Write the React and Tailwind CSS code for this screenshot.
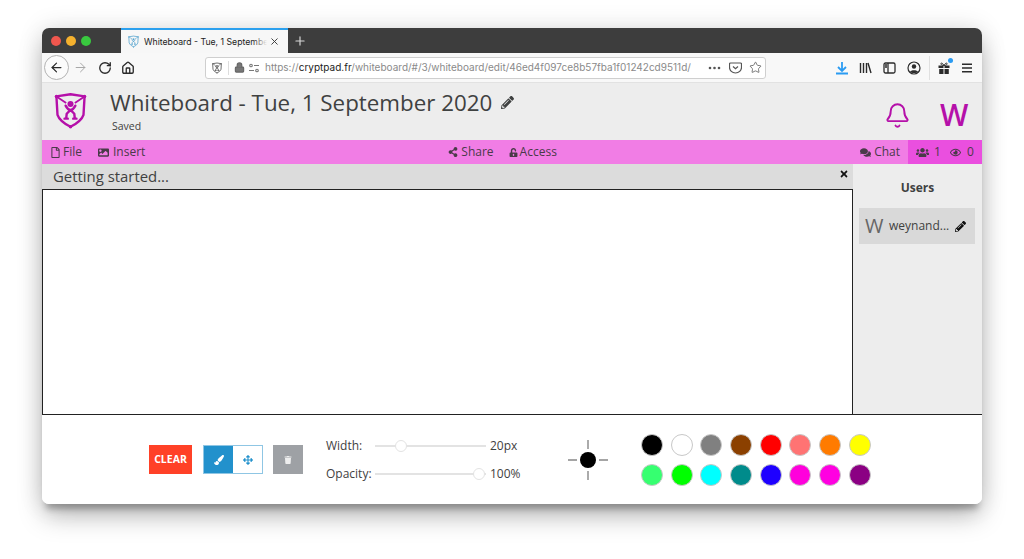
import React from "react";
import { FaRegFile, FaImage, FaShareAlt, FaUnlockAlt, FaComments, FaUsers, FaRegEye, FaPencilAlt, FaTimes, FaPaintBrush, FaArrowsAlt, FaTrash } from "react-icons/fa";
import { Bell, ArrowLeft, ArrowRight, RotateCw, House, Lock, Star, X, Plus } from "lucide-react";

const colors = [
  ["#000000", "#ffffff", "#808080", "#8b4000", "#ff0000", "#ff7373", "#ff7b00", "#ffff00"],
  ["#36ff70", "#00ff00", "#00ffff", "#008b8b", "#1e00ff", "#ff00dc", "#ff00e1", "#8b0083"],
];

function Shield({ color, size, strokeWidth = 2.2 }) {
  return (
    <svg width={size} height={size} viewBox="0 0 32 36" fill="none">
      <path d="M3 5 L16 3 L29 5 L28 22 Q26 28 16 33 Q6 28 4 22 Z" stroke={color} strokeWidth={strokeWidth} strokeLinejoin="round" />
      <path d="M3 5 L12 11 M29 5 L20 11" stroke={color} strokeWidth={strokeWidth * 0.75} />
      <circle cx="16" cy="12" r="2.8" fill={color} />
      <path d="M11.5 13.5 Q13.5 17.5 16 17.5 Q18.5 17.5 20.5 13.5 M16 17.5 L12.5 21 L12 25.5 M16 17.5 L19.5 21 L20 25.5 M10.5 25.5 L13.5 25.5 M21.5 25.5 L18.5 25.5" stroke={color} strokeWidth={strokeWidth} strokeLinecap="round" strokeLinejoin="round" />
      <circle cx="3" cy="5" r="1.6" fill={color} />
      <circle cx="29" cy="5" r="1.6" fill={color} />
      <circle cx="16" cy="33" r="1.6" fill={color} />
    </svg>
  );
}

function Slider({ thumb }) {
  return (
    <div className="relative w-[111px] h-[2px] bg-[#e3e3e3]">
      <div className="absolute top-[-5px] w-[12px] h-[12px] rounded-full bg-white border border-[#e3e3e3]" style={{ left: thumb }} />
    </div>
  );
}

export default function App() {
  return (
    <div className="w-[1024px] h-[559px] bg-white overflow-hidden pt-[28px] pl-[42px] font-['Open_Sans',sans-serif] text-[#3f4141]">
      <div className="w-[940px] h-[476px] rounded-[7px] overflow-hidden flex flex-col bg-white shadow-[0_0_26px_rgba(0,0,0,0.12),0_14px_26px_-2px_rgba(0,0,0,0.26),0_9px_6px_-4px_rgba(0,0,0,0.26)]">
        {/* Tab strip */}
        <div className="h-[25px] shrink-0 bg-[#3d3d3d] flex items-stretch">
          <div className="w-[79px] flex items-center gap-[5px] pl-[9px]">
            <span className="w-[10px] h-[10px] rounded-full bg-[#f0574e]" />
            <span className="w-[10px] h-[10px] rounded-full bg-[#f5b12e]" />
            <span className="w-[10px] h-[10px] rounded-full bg-[#39c93f]" />
          </div>
          <div className="w-[167px] bg-[#f7f7f7] border-t-2 border-[#2ba0ee] flex items-center pl-[6px] pr-[4px]">
            <Shield color="#5aa5cf" size={13} strokeWidth={2.2} />
            <div className="relative ml-[4px] w-[123px] overflow-hidden">
              <span className="block whitespace-nowrap text-[8.7px] leading-[14px] text-[#1c1c1c] font-['Inter',sans-serif]">Whiteboard - Tue, 1 September</span>
              <span className="absolute right-0 top-0 bottom-0 w-[14px] bg-gradient-to-r from-transparent to-[#f7f7f7]" />
            </div>
            <X size={11} className="ml-[2px] text-[#333]" />
          </div>
          <div className="w-[24px] flex items-center justify-center text-[#d8d8d8]"><Plus size={14} /></div>
        </div>

        {/* Browser toolbar */}
        <div className="h-[30px] shrink-0 bg-[#f8f8f8] border-b border-[#e2e2e2] flex items-center relative text-[#2b2b2b]">
          <div className="w-[25px] h-[25px] ml-[2px] rounded-full border border-[#b3b3b3] bg-[#fbfbfb] flex items-center justify-center shrink-0"><ArrowLeft size={15} strokeWidth={2} /></div>
          <ArrowRight size={15} strokeWidth={1.6} className="ml-[4px] text-[#a8a8a8] shrink-0" />
          <RotateCw size={14} strokeWidth={2.3} className="ml-[10px] shrink-0" />
          <House size={14} strokeWidth={2.3} className="ml-[9px] shrink-0" />
          <div className="ml-[70px] w-[561px] h-[22px] shrink-0 rounded-[3px] border border-[#cfcfcf] bg-white flex items-center pl-[5px] pr-[3px] text-[#666]">
            <Shield color="#666666" size={12} strokeWidth={2.8} />
            <span className="ml-[5px] w-px h-[14px] bg-[#ddd]" />
            <Lock size={11} strokeWidth={2.5} className="ml-[5px] shrink-0 fill-[#777]" />
            <svg width="12" height="10" viewBox="0 0 12 10" className="ml-[3px] shrink-0" fill="none" stroke="#777" strokeWidth="1.1"><circle cx="3" cy="2.5" r="1.3"/><path d="M6 2.5h5M1 7.5h5"/><circle cx="9" cy="7.5" r="1.3"/></svg>
            <span className="ml-[5px] flex-1 whitespace-nowrap overflow-hidden text-[10px] text-[#8a8a8a] font-['Inter',sans-serif]">https://<span className="text-[#222]">cryptpad.fr</span>/whiteboard/#/3/whiteboard/edit/46ed4f097ce8b57fba1f01242cd9511d/</span>
            <svg width="13" height="4" viewBox="0 0 13 4" className="mr-[8px] shrink-0" fill="#555"><circle cx="2" cy="2" r="1.3"/><circle cx="6.5" cy="2" r="1.3"/><circle cx="11" cy="2" r="1.3"/></svg>
            <svg width="13" height="12" viewBox="0 0 13 12" className="mr-[7px] shrink-0" fill="none" stroke="#555" strokeWidth="1.2"><path d="M1.5 1h10a1 1 0 0 1 1 1v3.5a6 5.5 0 0 1-12 0V2a1 1 0 0 1 1-1z" /><path d="M4 4.5l2.5 2.3L9 4.5" /></svg>
            <Star size={13} strokeWidth={1.6} className="shrink-0" />
          </div>
          <svg width="14" height="14" viewBox="0 0 14 14" className="ml-[69px] shrink-0" fill="none" stroke="#2a9bf2" strokeWidth="1.8"><path d="M7 1v8M3 6l4 4 4-4M1 12.5h12"/></svg>
          <svg width="13" height="12" viewBox="0 0 13 12" className="ml-[10px] shrink-0" fill="none" stroke="#2b2b2b" strokeWidth="1.4"><path d="M1.5 1v10M4.5 1v10M7.5 1v10M9 1l3 10"/></svg>
          <svg width="13" height="12" viewBox="0 0 13 12" className="ml-[11px] shrink-0" fill="none" stroke="#2b2b2b" strokeWidth="1.3"><rect x="1" y="1" width="11" height="10" rx="1.5"/><path d="M5 1v10"/><path d="M2 3h2M2 5h2" /></svg>
          <svg width="14" height="14" viewBox="0 0 14 14" className="ml-[11px] shrink-0"><circle cx="7" cy="7" r="6" fill="none" stroke="#2b2b2b" strokeWidth="1.2"/><circle cx="7" cy="5.5" r="2.2" fill="#2b2b2b"/><path d="M3 11c.5-2.5 7.5-2.5 8 0-1 1.3-7 1.3-8 0z" fill="#2b2b2b"/></svg>
          <span className="ml-[8px] w-px h-[24px] bg-[#e0e0e0] shrink-0" />
          <div className="relative ml-[8px] shrink-0 w-[12px] h-[12px]">
            <svg width="12" height="12" viewBox="0 0 12 12" fill="#2b2b2b"><path d="M0.5 3.5h5v2.5h-5zM6.5 3.5h5v2.5h-5zM1.2 7h4.3v5h-4.3zM6.5 7h4.3v5h-4.3z"/><path d="M6 3.5C4.5 .5 2.5 .5 3 2.2 3.3 3 5 3.5 6 3.5zM6 3.5C7.5 .5 9.5 .5 9 2.2 8.7 3 7 3.5 6 3.5z" fill="none" stroke="#2b2b2b" strokeWidth="1"/></svg>
            <span className="absolute top-[-4px] right-[-3px] w-[5px] h-[5px] rounded-full bg-[#2a9bf2]" />
          </div>
          <svg width="10" height="10" viewBox="0 0 10 10" className="ml-[12px] shrink-0" stroke="#2b2b2b" strokeWidth="1.4"><path d="M0 1.2h10M0 5h10M0 8.8h10"/></svg>
        </div>

        {/* App header */}
        <div className="h-[57px] shrink-0 bg-[#ededed] flex items-start relative">
          <div className="ml-[9px] mt-[8px] shrink-0"><Shield color="#b510a9" size={39} /></div>
          <div className="ml-[20px] mt-[3px]">
            <div className="flex items-center h-[33px]">
              <span className="text-[22.35px] leading-[33px] text-[#3f4141] whitespace-nowrap">Whiteboard - Tue, 1 September 2020</span>
              <FaPencilAlt size={13} className="ml-[9px] text-[#3f4141]" />
            </div>
            <div className="text-[10.5px] leading-[14px] ml-[2px]">Saved</div>
          </div>
          <div className="ml-auto flex items-center mt-[16px]">
            <Bell size={27} strokeWidth={1.7} className="text-[#b510a9]" />
            <span className="ml-[29px] mr-[14px] w-[28px] text-center text-[30px] leading-[32px] font-semibold text-[#b510a9]">W</span>
          </div>
        </div>

        {/* Pink menu bar */}
        <div className="h-[24px] shrink-0 bg-[#f17de5] flex items-center text-[12px] text-[#4a3a49] relative">
          <div className="flex items-center gap-[2px] ml-[8px]"><FaRegFile size={11} /><span>File</span></div>
          <div className="flex items-center gap-[4px] ml-[16px]"><FaImage size={11} /><span>Insert</span></div>
          <div className="flex items-center gap-[3px] ml-[303px]"><FaShareAlt size={10} /><span>Share</span></div>
          <div className="flex items-center gap-[2px] ml-[15px]"><FaUnlockAlt size={9} /><span>Access</span></div>
          <div className="flex items-center gap-[3px] ml-auto mr-[8px]"><FaComments size={11} /><span>Chat</span></div>
          <div className="h-full w-[74px] bg-[#ea4fdf] flex items-center pl-[8px]">
            <FaUsers size={13} /><span className="ml-[5px]">1</span>
            <FaRegEye size={11} className="ml-[9px]" /><span className="ml-[6px]">0</span>
          </div>
        </div>

        {/* Main */}
        <div className="h-[251px] shrink-0 flex border-b border-[#222]">
          <div className="w-[811px] shrink-0 flex flex-col">
            <div className="h-[26px] shrink-0 bg-[#dcdcdc] flex items-start justify-between border-b border-[#222] pl-[11px] pr-[4px]">
              <span className="text-[14.9px] leading-[25px] text-[#3f4141]">Getting started...</span>
              <FaTimes size={10} className="mt-[5px] text-[#111]" />
            </div>
            <div className="flex-1 bg-white border-r border-l border-[#222]" />
          </div>
          <div className="flex-1 bg-[#ededed] flex flex-col items-center">
            <div className="text-[12px] leading-[16px] font-bold mt-[16px]">Users</div>
            <div className="mt-[12px] self-start ml-[6px] w-[116px] h-[36px] bg-[#d9d9d9] flex items-center pl-[6px] text-[#555]">
              <span className="text-[20px] leading-none w-[18px] text-[#666]">W</span>
              <span className="ml-[6px] text-[12px] text-[#3f4141]">weynand...</span>
              <FaPencilAlt size={11} className="ml-[6px] text-[#111]" />
            </div>
          </div>
        </div>

        {/* Bottom toolbar */}
        <div className="flex-1 bg-white flex items-start">
          <div className="ml-[107px] mt-[30px] w-[43px] h-[29px] bg-[#ff4127] text-white text-[10.5px] font-bold flex items-center justify-center">CLEAR</div>
          <div className="ml-[11px] mt-[30px] w-[60px] h-[29px] flex border border-[#8fc6e4]">
            <div className="w-[29px] bg-[#2291cc] flex items-center justify-center text-white"><FaPaintBrush size={10} /></div>
            <div className="flex-1 bg-white flex items-center justify-center text-[#2291cc]"><FaArrowsAlt size={10} /></div>
          </div>
          <div className="ml-[10px] mt-[30px] w-[30px] h-[29px] bg-[#9ea1a5] flex items-center justify-center text-[#eee]"><FaTrash size={8} /></div>
          <div className="ml-[23px] mt-[22px] w-[205px] flex flex-col gap-[11px] text-[12px] text-[#3f4141]">
            <div className="flex items-center h-[17px]">
              <span className="w-[49px]">Width:</span>
              <Slider thumb="20px" />
              <span className="ml-[4px]">20px</span>
            </div>
            <div className="flex items-center h-[17px]">
              <span className="w-[49px]">Opacity:</span>
              <Slider thumb="98px" />
              <span className="ml-[4px]">100%</span>
            </div>
          </div>
          <div className="relative ml-[37px] mt-[25px] w-[40px] h-[40px] shrink-0">
            <svg width="40" height="40" viewBox="0 0 40 40" stroke="#888" strokeWidth="1.4">
              <path d="M20 0v9M20 31v9M0 20h9M31 20h9" />
              <circle cx="20" cy="20" r="8" fill="#000" stroke="none" />
            </svg>
          </div>
          <div className="ml-[33px] mt-[19px] flex flex-col gap-[8px]">
            {colors.map((row, i) => (
              <div key={i} className="flex gap-[7.7px]">
                {row.map((c, j) => (
                  <span key={j} className="w-[22px] h-[22px] rounded-full border border-[#c8c8c8]" style={{ backgroundColor: c }} />
                ))}
              </div>
            ))}
          </div>
        </div>
      </div>
    </div>
  );
}
